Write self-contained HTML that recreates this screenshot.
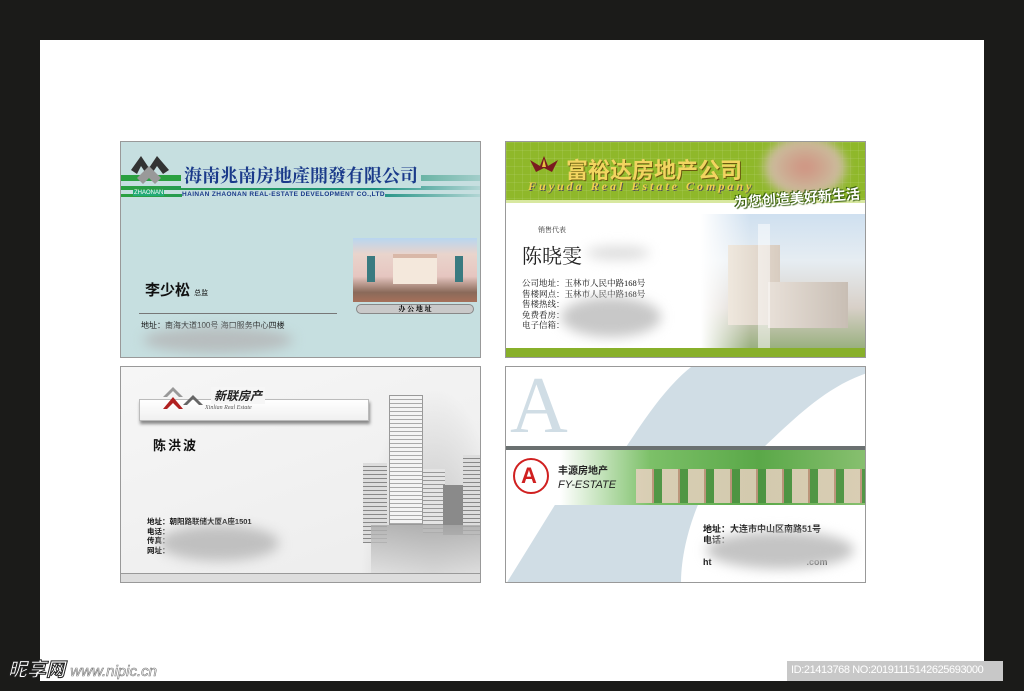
<!DOCTYPE html>
<html><head><meta charset="utf-8"><style>
*{margin:0;padding:0;box-sizing:border-box}
body{width:1024px;height:691px;background:#1b1b19;position:relative;overflow:hidden;font-family:"Liberation Sans","Noto Sans CJK SC",sans-serif}
.a{position:absolute}
.panel{left:40px;top:40px;width:944px;height:641px;background:#fff}
.card{position:absolute;border:1px solid #999;overflow:hidden}
.blur{position:absolute;border-radius:50%;filter:blur(6px)}
.serif{font-family:"Liberation Serif","Noto Serif CJK SC",serif}
</style></head><body>
<div class="a panel"></div>

<!-- Card 1 -->
<div class="card" style="left:120px;top:141px;width:361px;height:217px;background:#c6dfe0">
  <div class="a" style="left:0;top:33px;width:361px;height:6px;background:linear-gradient(90deg,#2aa040 0%,#2aa040 20%,#1a9070 60%,rgba(30,140,120,0.2) 100%)"></div>
  <div class="a" style="left:0;top:44px;width:361px;height:4px;background:linear-gradient(90deg,#2aa040,#1a8f80 70%,rgba(30,140,120,0.1))"></div>
  <div class="a" style="left:0;top:52px;width:361px;height:3px;background:linear-gradient(90deg,#2aa040,#1a8f80 70%,rgba(30,140,120,0.1))"></div>
  <svg class="a" style="left:8px;top:12px" width="44" height="36" viewBox="0 0 44 36"><path d="M2 16 L12 2 L20 14 L28 2 L40 16 L34 20 L28 12 L20 24 L12 12 L8 20Z" fill="#333"/><path d="M8 24 L20 12 L32 24 L26 30 L20 24 L14 30Z" fill="#999"/></svg>
  <div class="a" style="left:12px;top:48px;font-size:6px;color:#fff;background:#2a7;padding:0 1px">ZHAONAN</div>
  <div class="a serif" style="left:60px;top:20px;font-size:18px;color:#1a3a8a;font-weight:bold;letter-spacing:0px;background:#c6dfe0;padding:0 3px">海南兆南房地產開發有限公司</div>
  <div class="a" style="left:61px;top:49px;font-size:6.5px;color:#1a3a8a;font-weight:bold;background:#c6dfe0;letter-spacing:.4px">HAINAN ZHAONAN REAL-ESTATE DEVELOPMENT CO.,LTD</div>
  <div class="a" style="left:232px;top:96px;width:124px;height:64px;background:linear-gradient(180deg,#b9d6f0 0%,#e9d4cc 25%,#e6c6c0 60%,#8a6a5a 85%,#a6705a 100%)">
    <div class="a" style="left:40px;top:16px;width:44px;height:30px;background:#f4e8dc;border-top:4px solid #d9b8a8"></div>
    <div class="a" style="left:14px;top:18px;width:8px;height:26px;background:#3a7a80"></div>
    <div class="a" style="left:102px;top:18px;width:8px;height:26px;background:#3a7a80"></div>
  </div>
  <div class="a serif" style="left:235px;top:162px;width:118px;height:10px;border-radius:5px;background:#c9c9c9;border:1px solid #888;font-size:7px;text-align:center;line-height:8px;font-weight:bold">办 公 地 址</div>
  <div class="a" style="left:24px;top:137px;font-size:15px;font-weight:bold;color:#111">李少松 <span style="font-size:7px;font-weight:normal">总监</span></div>
  <div class="a" style="left:18px;top:171px;width:198px;height:1px;background:#777"></div>
  <div class="a" style="left:20px;top:178px;font-size:8px;color:#111">地址：南海大道100号 海口服务中心四楼</div>
  <div class="blur" style="left:22px;top:185px;width:150px;height:26px;background:#b7bdbe"></div>
</div>

<!-- Card 2 -->
<div class="card" style="left:505px;top:141px;width:361px;height:217px;background:#fff">
  <div class="a" style="left:0;top:0;width:361px;height:60px;background:#8fb82a;background-image:linear-gradient(rgba(255,255,255,.08) 1px,transparent 1px),linear-gradient(90deg,rgba(255,255,255,.08) 1px,transparent 1px);background-size:8px 8px"></div>
  <div class="a" style="left:0;top:58px;width:361px;height:3px;background:#d8e8a0"></div>
  <svg class="a" style="left:24px;top:14px" width="28" height="18" viewBox="0 0 28 18"><path d="M0 4 L10 10 L14 0 L18 10 L28 4 L22 16 L14 12 L6 16Z" fill="#7a1a20"/><path d="M14 3 L16 11 L12 11Z" fill="#e8c040"/></svg>
  <div class="a" style="left:60px;top:11px;font-size:22px;font-weight:bold;color:#f2d460;text-shadow:1px 1px 0 #6a5a10">富裕达房地产公司</div>
  <div class="a serif" style="left:22px;top:37px;font-size:12px;font-style:italic;font-weight:bold;color:#f0d050;letter-spacing:3px;text-shadow:1px 1px 0 #555">Fuyuda Real Estate Company</div>
  <div class="blur" style="left:258px;top:-6px;width:82px;height:62px;background:radial-gradient(#d09080,#c8d8b0);filter:blur(5px)"></div>
  <div class="a" style="left:228px;top:46px;font-size:14px;font-weight:bold;color:#fff;text-shadow:1px 1px 1px #3a6010,-1px -1px 0 #3a6010;transform:rotate(-4deg)">为您创造美好新生活</div>
  <div class="a" style="left:195px;top:72px;width:166px;height:134px;background:linear-gradient(90deg,#fff 0%,rgba(255,255,255,0) 30%),linear-gradient(180deg,#cfe0f0 0%,#e6edf2 35%,#d8d0c8 70%,#9ab080 100%)"></div>
  <div class="a" style="left:222px;top:103px;width:52px;height:80px;background:linear-gradient(90deg,#efe8de,#d8ccc0)"></div>
  <div class="a" style="left:262px;top:140px;width:80px;height:46px;background:linear-gradient(90deg,#e8e0d8,#c8beb4)"></div>
  <div class="a" style="left:252px;top:82px;width:12px;height:124px;background:rgba(255,255,255,.5)"></div>
  <div class="a serif" style="left:32px;top:83px;font-size:7px;color:#333">销售代表</div>
  <div class="a serif" style="left:16px;top:98px;font-size:20px;color:#222">陈晓雯</div>
  <div class="blur" style="left:80px;top:104px;width:64px;height:14px;background:#ddd"></div>
  <div class="a serif" style="left:16px;top:136px;font-size:8.5px;color:#111;line-height:10.5px">公司地址：玉林市人民中路168号<br>售楼网点：玉林市人民中路168号<br>售楼热线：<br>免费看房：<br>电子信箱：</div>
  <div class="blur" style="left:55px;top:155px;width:100px;height:40px;background:#c8c8c8"></div>
  <div class="a" style="left:0;top:206px;width:361px;height:11px;background:#88b02a"></div>
</div>

<!-- Card 3 -->
<div class="card" style="left:120px;top:366px;width:361px;height:217px;background:linear-gradient(160deg,#f6f6f6,#ececec)">
  <div class="a" style="left:18px;top:32px;width:230px;height:22px;background:linear-gradient(#fff,#f0f0f0);border:1px solid #bbb;box-shadow:1px 3px 3px #888"></div>
  <svg class="a" style="left:40px;top:18px" width="44" height="26" viewBox="0 0 44 26"><path d="M2 12 L12 2 L22 12 L18 12 L12 6 L6 12Z" fill="#999"/><path d="M2 24 L12 12 L22 24 L18 24 L12 18 L6 24Z" fill="#b02020"/><path d="M22 20 L32 10 L42 20 L38 20 L32 14 L26 20Z" fill="#666"/></svg>
  <div class="a" style="left:90px;top:20px;font-size:12px;font-weight:bold;font-style:italic;color:#222;background:#f6f6f6;padding:0 3px">新联房产</div>
  <div class="a serif" style="left:84px;top:38px;font-size:6px;font-style:italic;color:#555">Xinlian Real Estate</div>
  <div class="a" style="left:32px;top:68px;font-size:13px;font-weight:bold;color:#111;letter-spacing:2px">陈洪波</div>
  <div class="a" style="left:240px;top:20px;width:121px;height:190px;background:radial-gradient(ellipse at 60% 100%,#bbb,rgba(230,230,230,0) 70%)"></div>
  <div class="a" style="left:268px;top:28px;width:34px;height:130px;background:repeating-linear-gradient(#f4f4f4 0 3px,#aaa 3px 4px);border:1px solid #999"></div>
  <div class="a" style="left:242px;top:96px;width:24px;height:80px;background:repeating-linear-gradient(#ddd 0 3px,#888 3px 4px)"></div>
  <div class="a" style="left:302px;top:102px;width:22px;height:64px;background:repeating-linear-gradient(#e4e4e4 0 3px,#999 3px 4px)"></div>
  <div class="a" style="left:322px;top:118px;width:20px;height:50px;background:#8a8a8a"></div>
  <div class="a" style="left:342px;top:88px;width:19px;height:80px;background:repeating-linear-gradient(#ddd 0 3px,#888 3px 4px)"></div>
  <div class="a" style="left:250px;top:158px;width:111px;height:48px;background:linear-gradient(#aaa,#ddd);opacity:.8"></div>
  <div class="a" style="left:26px;top:150px;font-size:7.5px;font-weight:bold;color:#111;line-height:9.5px">地址：朝阳路联储大厦A座1501<br>电话：<br>传真：<br>网址：</div>
  <div class="blur" style="left:38px;top:158px;width:120px;height:36px;background:#c0c0c0"></div>
  <div class="a" style="left:0;top:206px;width:361px;height:11px;background:#ddd;border-top:1px solid #999"></div>
</div>

<!-- Card 4 -->
<div class="card" style="left:505px;top:366px;width:361px;height:217px;background:#fff">
  <svg class="a" style="left:0;top:0" width="361" height="217" viewBox="0 0 361 217"><path d="M185 0 L361 0 L361 6 C320 20 290 50 258 80 L120 80 C140 50 160 20 185 0Z" fill="#d0dde5"/><path d="M0 217 L60 120 L200 120 C185 150 175 185 175 217Z" fill="#d0dde5"/></svg>
  <div class="a serif" style="left:4px;top:-6px;font-size:80px;line-height:90px;color:#d0dde5">A</div>
  <div class="a" style="left:0;top:79px;width:361px;height:4px;background:#6a7070"></div>
  <div class="a" style="left:0;top:83px;width:361px;height:55px;background:linear-gradient(90deg,#fff 0%,#fff 15%,#7cc068 40%,#5aa848 70%,#88c070 100%)"></div>
  <div class="a" style="left:130px;top:102px;width:231px;height:34px;background:repeating-linear-gradient(90deg,#e8d0c0 0 16px,#c89080 16px 18px,#4a9040 18px 26px);opacity:.85"></div>
  <div class="a" style="left:7px;top:91px;width:36px;height:36px;border:2px solid #d02020;border-radius:50%"></div>
  <div class="a" style="left:15px;top:96px;font-size:22px;font-weight:bold;color:#d02020;line-height:26px">A</div>
  <div class="a" style="left:52px;top:95px;font-size:10px;font-weight:bold;color:#222">丰源房地产</div>
  <div class="a" style="left:52px;top:112px;font-size:11px;color:#222;font-style:italic">FY-ESTATE</div>
  <div class="a" style="left:197px;top:157px;font-size:9px;font-weight:bold;color:#111;line-height:11px">地址：大连市中山区南路51号<br>电话：<br><br>ht&nbsp;&nbsp;&nbsp;&nbsp;&nbsp;&nbsp;&nbsp;&nbsp;&nbsp;&nbsp;&nbsp;&nbsp;&nbsp;&nbsp;&nbsp;&nbsp;&nbsp;&nbsp;&nbsp;&nbsp;&nbsp;&nbsp;&nbsp;&nbsp;&nbsp;&nbsp;&nbsp;&nbsp;&nbsp;&nbsp;&nbsp;&nbsp;&nbsp;&nbsp;&nbsp;&nbsp;&nbsp;&nbsp;.com</div>
  <div class="blur" style="left:200px;top:164px;width:148px;height:38px;background:#c4c4c4"></div>
</div>

<!-- watermark -->
<div class="a" style="left:8px;top:660px;font-size:19px;line-height:22px;font-weight:bold;font-style:italic;color:#fff;-webkit-text-stroke:1px #222">昵享网 <span style="font-size:15px;color:#fff;font-weight:normal;-webkit-text-stroke:0.6px #777">www.nipic.cn</span></div>
<div class="a" style="left:787px;top:661px;width:216px;height:20px;background:#c8c8c8"></div>
<div class="a" style="left:791px;top:664px;font-size:11px;color:#fff;letter-spacing:-0.4px">ID:21413768 NO:20191115142625693000</div>
</body></html>
